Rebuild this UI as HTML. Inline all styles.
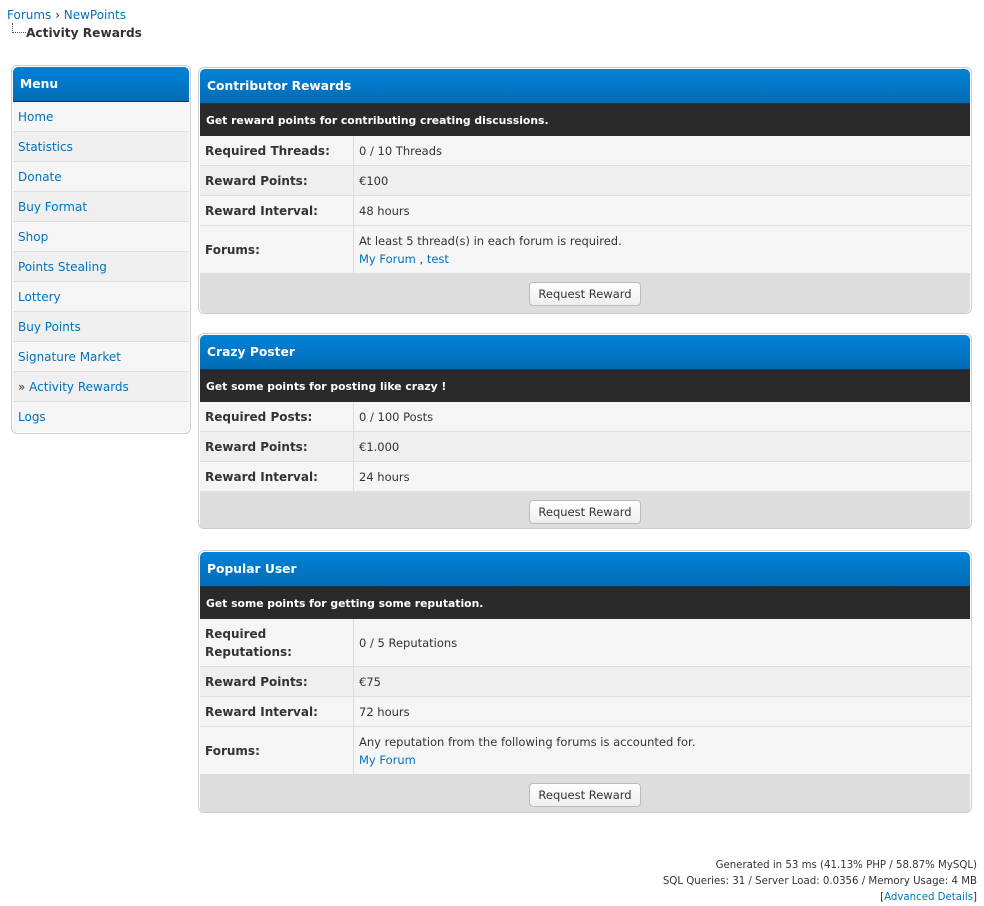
<!DOCTYPE html>
<html><head><meta charset="utf-8"><style>
*{box-sizing:border-box;margin:0;padding:0}
body{width:984px;height:903px;background:#fff;font-family:"DejaVu Sans","Liberation Sans",sans-serif;font-size:11.5px;color:#333;position:relative;overflow:hidden}
a{color:#0072bc;text-decoration:none}
.bc{position:absolute;left:7px;top:8px;font-size:12px}
.bc2{position:absolute;left:12px;top:23px;width:14px;height:10px;border-left:1px dotted #555;border-bottom:1px dotted #555}
.title{position:absolute;left:26px;top:26px;font-weight:bold;font-size:12.2px;color:#333}
.box{position:absolute;border:1px solid #ccc;border-radius:6px;background:#fff;padding:1px;overflow:hidden}
.hd{background:linear-gradient(#0182d8,#026cb4);color:#fff;font-weight:bold;font-size:12.3px;padding-left:7px;display:flex;align-items:center;border-bottom:1px solid #0f3a60;border-radius:5px 5px 0 0}
.sub{background:#2a2a2a;color:#fff;font-weight:bold;font-size:10.8px;padding-left:6px;display:flex;align-items:center;height:32px}
.row{display:flex;border-bottom:1px solid #ddd}
.row .l{width:154px;border-right:1px solid #ddd;font-weight:bold;padding-left:5px;display:flex;align-items:center;font-size:12px}
.row .r{flex:1;padding-left:5px;display:flex;flex-direction:column;justify-content:center;line-height:18px}
.a{background:#f5f5f5}.b{background:#efefef}
.ft{background:#ddd;display:flex;justify-content:center;align-items:center;height:39px;border-radius:0 0 5px 5px}
.btn{background:linear-gradient(#fff,#eee);border:1px solid #bbb;border-radius:4px;padding:0 8px;height:24px;line-height:22px;font-size:11.5px;color:#333}
.menu .it{height:30px;border-bottom:1px solid #ddd;padding-left:5px;display:flex;align-items:center;font-size:12px}
.foot{position:absolute;right:7px;top:858px;text-align:right;font-size:10.2px;line-height:16px;color:#333}
</style></head><body>
<div class="bc"><a href="#">Forums</a> › <a href="#">NewPoints</a></div>
<div class="bc2"></div>
<div class="title">Activity Rewards</div>

<div class="box menu" style="left:11px;top:65px;width:180px;height:369px">
<div class="hd" style="height:35px">Menu</div>
<div class="it a"><a href="#">Home</a></div>
<div class="it b"><a href="#">Statistics</a></div>
<div class="it a"><a href="#">Donate</a></div>
<div class="it b"><a href="#">Buy Format</a></div>
<div class="it a"><a href="#">Shop</a></div>
<div class="it b"><a href="#">Points Stealing</a></div>
<div class="it a"><a href="#">Lottery</a></div>
<div class="it b"><a href="#">Buy Points</a></div>
<div class="it a"><a href="#">Signature Market</a></div>
<div class="it b">»&nbsp;<a href="#">Activity Rewards</a></div>
<div class="it a" style="border:none"><a href="#">Logs</a></div>
</div>

<div class="box" style="left:198px;top:67px;width:774px;height:247px">
<div class="hd" style="height:35px">Contributor Rewards</div>
<div class="sub">Get reward points for contributing creating discussions.</div>
<div class="row a" style="height:30px"><div class="l">Required Threads:</div><div class="r">0 / 10 Threads</div></div>
<div class="row b" style="height:30px"><div class="l">Reward Points:</div><div class="r">€100</div></div>
<div class="row a" style="height:30px"><div class="l">Reward Interval:</div><div class="r">48 hours</div></div>
<div class="row a" style="height:48px"><div class="l">Forums:</div><div class="r"><span>At least 5 thread(s) in each forum is required.</span><span><a href="#">My Forum</a> , <a href="#">test</a></span></div></div>
<div class="ft"><span class="btn">Request Reward</span></div>
</div>

<div class="box" style="left:198px;top:333px;width:774px;height:196px">
<div class="hd" style="height:35px">Crazy Poster</div>
<div class="sub">Get some points for posting like crazy !</div>
<div class="row a" style="height:30px"><div class="l">Required Posts:</div><div class="r">0 / 100 Posts</div></div>
<div class="row b" style="height:30px"><div class="l">Reward Points:</div><div class="r">€1.000</div></div>
<div class="row a" style="height:30px"><div class="l">Reward Interval:</div><div class="r">24 hours</div></div>
<div class="ft"><span class="btn">Request Reward</span></div>
</div>

<div class="box" style="left:198px;top:550px;width:774px;height:263px">
<div class="hd" style="height:35px">Popular User</div>
<div class="sub">Get some points for getting some reputation.</div>
<div class="row a" style="height:48px"><div class="l" style="line-height:18px">Required<br>Reputations:</div><div class="r">0 / 5 Reputations</div></div>
<div class="row b" style="height:30px"><div class="l">Reward Points:</div><div class="r">€75</div></div>
<div class="row a" style="height:30px"><div class="l">Reward Interval:</div><div class="r">72 hours</div></div>
<div class="row a" style="height:48px"><div class="l">Forums:</div><div class="r"><span>Any reputation from the following forums is accounted for.</span><span><a href="#">My Forum</a></span></div></div>
<div class="ft"><span class="btn">Request Reward</span></div>
</div>

<div class="foot">Generated in 53 ms (41.13% PHP / 58.87% MySQL)<br>SQL Queries: 31 / Server Load: 0.0356 / Memory Usage: 4 MB<br>[<a href="#">Advanced Details</a>]</div>
</body></html>
